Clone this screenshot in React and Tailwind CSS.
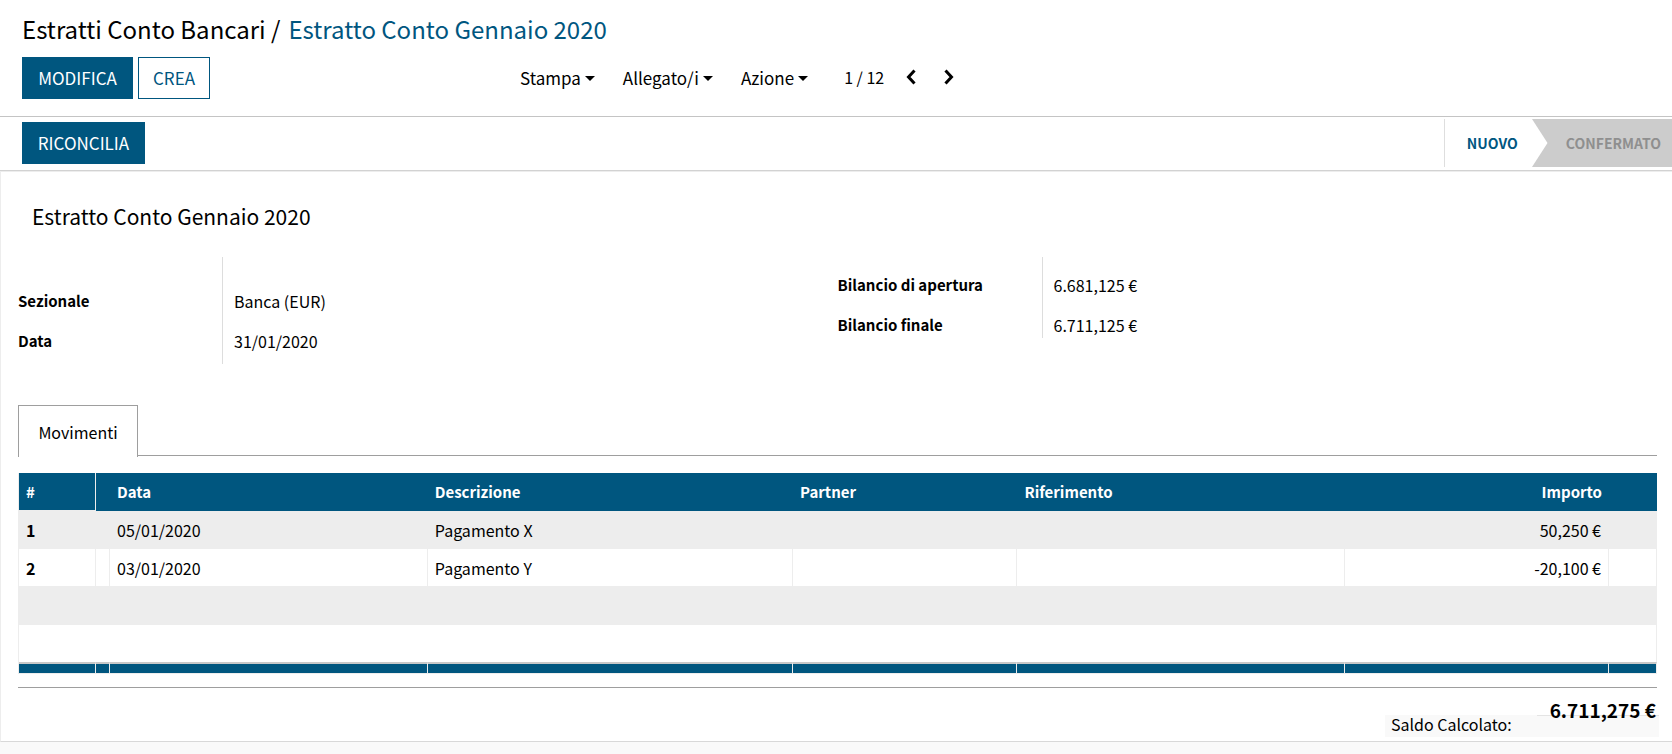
import React from "react";

const MENUS = ["Stampa", "Allegato/i", "Azione"];

const ROWS = [
  { n: "1", date: "05/01/2020", description: "Pagamento X", amount: "50,250 €" },
  { n: "2", date: "03/01/2020", description: "Pagamento Y", amount: "-20,100 €" },
];

function Caret() {
  return (
    <svg width="10" height="5" viewBox="0 0 10 5" aria-hidden="true">
      <path d="M0 0h10L5 5z" fill="currentColor" />
    </svg>
  );
}

function Chevron({ d }) {
  return (
    <svg width="10" height="16" viewBox="0 0 10 16" fill="none" aria-hidden="true">
      <path d={d} stroke="currentColor" strokeWidth="3" />
    </svg>
  );
}

function Field({ label, value }) {
  return (
    <div className="flex h-6 items-center">
      <dt className="w-[204px] shrink-0 text-[15px] font-bold">{label}</dt>
      <dd className="pl-3">{value}</dd>
    </div>
  );
}

function Header() {
  return (
    <header className="h-[117px] border-b border-[#c4c4c4] px-[22px] pt-[14px]">
      <nav aria-label="Breadcrumb" className="flex gap-2 text-2xl leading-[29px]">
        <span className="whitespace-nowrap">
          <a href="#estratti">Estratti Conto Bancari</a> /
        </span>
        <span className="whitespace-nowrap text-[#00567f]">Estratto Conto Gennaio 2020</span>
      </nav>
      <div className="mt-[14px] flex items-center">
        <div className="flex w-[498px] shrink-0 gap-[5px]">
          <button className="h-[42px] w-[111px] bg-[#00567f] text-[17px] text-white">MODIFICA</button>
          <button className="h-[42px] w-[72px] border border-[#00567f] text-[17px] text-[#00567f]">CREA</button>
        </div>
        <div className="flex items-center gap-7 text-[17px] leading-6">
          {MENUS.map((m) => (
            <button key={m} className="flex items-center gap-1">
              {m}
              <Caret />
            </button>
          ))}
        </div>
        <div className="ml-9 flex items-center pb-[2px] text-base leading-6">
          <span className="whitespace-nowrap">1 / 12</span>
          <button aria-label="Precedente" className="ml-[22px]">
            <Chevron d="M8.500 1.500 2.500 8l6 6.500" />
          </button>
          <button aria-label="Successivo" className="ml-7">
            <Chevron d="M1.500 1.500l6 6.500-6 6.500" />
          </button>
        </div>
      </div>
    </header>
  );
}

function StatusBar() {
  return (
    <div className="flex h-[54px] items-start justify-between border-b border-[#d2d2d2] pt-[2px] pl-[22px]">
      <button className="mt-[3px] h-[42px] w-[123px] bg-[#00567f] text-[17px] text-white">RICONCILIA</button>
      <ol className="flex h-12 items-stretch border-l border-[#dedede] text-sm font-bold">
        <li className="flex w-[87px] items-center pl-[22px] text-[#00567f]">NUOVO</li>
        <li className="flex items-center bg-[#cccccc] text-[#8f8f8f]">
          <svg width="16" height="48" viewBox="0 0 16 48" aria-hidden="true">
            <path d="M0 0l15.500 24L0 48z" fill="#ffffff" />
          </svg>
          <span className="pr-[11px] pl-[18px]">CONFERMATO</span>
        </li>
      </ol>
    </div>
  );
}

function Movements() {
  const cell = "border-r border-b border-[#ededed] px-[7px]";
  return (
    <table className="mt-4 w-full table-fixed border-separate border-spacing-0 border-l border-[#ededed] text-left text-base leading-6">
      <colgroup>
        <col className="w-[77px]" />
        <col className="w-[14px]" />
        <col className="w-[19.4%]" />
        <col className="w-[22.3%]" />
        <col className="w-[13.7%]" />
        <col className="w-[20%]" />
        <col />
        <col className="w-[48px]" />
      </colgroup>
      <thead>
        <tr className="h-[38px] bg-[#00567f] text-[15px] text-white">
          <th className="border-r border-b border-[#ededed] px-[7px]">#</th>
          <th></th>
          <th className="px-[7px]">Data</th>
          <th className="px-[7px]">Descrizione</th>
          <th className="px-[7px]">Partner</th>
          <th className="px-[7px]">Riferimento</th>
          <th className="px-[7px] text-right">Importo</th>
          <th></th>
        </tr>
      </thead>
      <tbody>
        {ROWS.map((r) => (
          <tr key={r.n} className="h-[38px] odd:bg-[#ededed]">
            <th scope="row" className={cell}>{r.n}</th>
            <td className="border-r border-b border-[#ededed]"></td>
            <td className={cell}>{r.date}</td>
            <td className={cell}>{r.description}</td>
            <td className={cell}></td>
            <td className={cell}></td>
            <td className="border-r border-b border-[#ededed] px-[7px] text-right">{r.amount}</td>
            <td className={cell}></td>
          </tr>
        ))}
        <tr className="h-[38px] bg-[#ededed]">
          <td colSpan={8}></td>
        </tr>
        <tr className="h-[37px]">
          <td colSpan={8} className="border-r border-[#ededed]"></td>
        </tr>
      </tbody>
      <tfoot>
        <tr className="h-3 bg-[#00567f]">
          {[0, 1, 2, 3, 4, 5, 6, 7].map((i) => (
            <td key={i} className="border-t-2 border-r border-b border-t-[#c8c8c8] border-r-[#ededed] border-b-[#ededed]"></td>
          ))}
        </tr>
      </tfoot>
    </table>
  );
}

export default function App() {
  const group =
    "flex flex-col gap-4 bg-[linear-gradient(#dddddd,#dddddd)] bg-[length:1px_100%] bg-[position:204px_0] bg-no-repeat";
  return (
    <div className="min-h-screen bg-[#f9f9f9] font-['Noto_Sans_CJK_SC',sans-serif] text-black">
      <div className="bg-white">
        <Header />
        <StatusBar />
        <main className="border-t border-b border-l border-[#ededed] border-b-[#d8d8d8] pr-[15px] pb-1 pl-[17px]">
          <h1 className="pt-[30px] pl-[14px] text-[21px] leading-7">Estratto Conto Gennaio 2020</h1>
          <div className="mt-[27px] grid grid-cols-2 items-start text-base leading-6">
            <dl className={`${group} pt-8 pb-[11px]`}>
              <Field label="Sezionale" value="Banca (EUR)" />
              <Field label="Data" value="31/01/2020" />
            </dl>
            <dl className={`${group} pt-4 pb-px`}>
              <Field label="Bilancio di apertura" value="6.681,125 €" />
              <Field label="Bilancio finale" value="6.711,125 €" />
            </dl>
          </div>
          <div role="tablist" className="mt-[41px] flex h-[52px] items-stretch">
            <button role="tab" aria-selected="true" className="w-[120px] border-x border-t border-[#9e9e9e] text-base">
              Movimenti
            </button>
            <div className="mb-px grow border-b border-[#9e9e9e]"></div>
          </div>
          <Movements />
          <div className="mt-[13px] border-t border-[#9e9e9e] pt-[27px]">
            <div className="-mr-[2px] ml-auto flex h-[22px] w-[274px] items-start justify-between bg-[#f9f9f9] pl-[6px]">
              <span className="text-base leading-[18px]">Saldo Calcolato:</span>
              <span className="flex w-[122px] justify-end border-t border-[#e4e4e4] pr-[3px]">
                <strong className="-mt-[18px] text-[19px] leading-6 whitespace-nowrap">6.711,275 €</strong>
              </span>
            </div>
          </div>
        </main>
      </div>
    </div>
  );
}
